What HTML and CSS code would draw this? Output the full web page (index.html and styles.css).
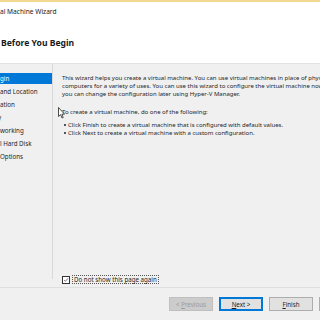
FILE: index.html
```html
<!DOCTYPE html>
<html>

<head>
    <title>New Virtual Machine Wizard</title>
    <link rel="stylesheet" href="styles.css">
</head>

<body>
    <div class="window">
        <div class="titlebar">al Machine Wizard</div>

        <div class="header">
            <h1>Before You Begin</h1>
        </div>

        <div class="main">
            <ul class="steps">
                <li class="active">gin</li>
                <li>and Location</li>
                <li>ation</li>
                <li><span class="stub">y</span></li>
                <li>working</li>
                <li>l Hard Disk</li>
                <li>Options</li>
            </ul>

            <div class="content">
                <p class="intro">
                    <span>This wizard helps you create a virtual machine. You can use virtual machines in place of physical</span>
                    <span>computers for a variety of uses. You can use this wizard to configure the virtual machine now, or</span>
                    <span>you can change the configuration later using Hyper-V Manager.</span>
                </p>
                <p class="lead">To create a virtual machine, do one of the following:</p>
                <ul class="options">
                    <li>Click Finish to create a virtual machine that is configured with default values.</li>
                    <li>Click Next to create a virtual machine with a custom configuration.</li>
                </ul>

                <label class="check">
                    <span class="box">
                        <svg width="8" height="8" viewBox="0 0 8 8">
                            <path d="M1.5 4.2 L3.2 5.8 L6.6 1.8" fill="none" stroke="#333" stroke-width="0.9"/>
                        </svg>
                    </span>
                    <span class="check-label">Do not show this page again</span>
                </label>
            </div>
        </div>

        <div class="footer">
            <button class="btn" disabled>&lt; <u>P</u>revious</button>
            <button class="btn default"><u>N</u>ext &gt;</button>
            <button class="btn"><u>F</u>inish</button>
            <button class="btn">Cancel</button>
        </div>

        <svg class="cursor" width="7" height="12" viewBox="0 0 7 12">
            <path d="M0.5 0.5 L0.5 9.5 L2.6 7.6 L4 11 L5.2 10.5 L3.9 7.2 L6.5 7.2 Z" fill="#fff" stroke="#222" stroke-width="0.8"/>
        </svg>
    </div>
</body>

</html>
```

FILE: styles.css
```css
body {
    margin: 0;
    width: 320px;
    height: 320px;
    overflow: hidden;
    background-color: #f0f0f0;
    font-family: "Noto Sans", "DejaVu Sans", sans-serif;
    font-size: 6px;
    color: #1e1e1e;
}

.window {
    position: relative;
    display: flex;
    flex-direction: column;
    height: 320px;
}

.titlebar {
    height: 19px;
    line-height: 19px;
    background-color: #ffffff;
    border-top: 2px solid #f3d98f;
    font-size: 6.6px;
    color: #222;
    white-space: nowrap;
}

.header {
    height: 42px;
    background-color: #ffffff;
    border-bottom: 1px solid #e2e2e2;
}

h1 {
    margin: 0;
    padding: 16px 0 0 1px;
    font-size: 8.6px;
    font-weight: bold;
    line-height: 12px;
    color: #1a1a1a;
}

.main {
    display: flex;
    height: 223px;
}

.steps {
    list-style: none;
    margin: 0 0 8px 0;
    padding: 9px 0 0 0;
    width: 52px;
    border-right: 1px solid #d8d8d8;
    white-space: nowrap;
    overflow: hidden;
}

.steps li {
    height: 11px;
    line-height: 12px;
    margin-bottom: 2px;
    font-size: 6.2px;
}

.steps li.active {
    background-color: #0078d7;
    color: #ffffff;
}

.stub {
    display: inline-block;
    margin-left: -2px;
}

.content {
    flex: 1;
    display: flex;
    flex-direction: column;
    padding: 10px 0 0 9px;
    white-space: nowrap;
    overflow: hidden;
}

.intro {
    margin: 0;
}

.intro span {
    display: block;
    line-height: 8px;
}

.lead {
    margin: 10px 0 0 0;
    line-height: 8px;
}

.options {
    margin: 5px 0 0 0;
    padding: 0 0 0 2px;
    list-style: none;
}

.options li {
    display: flex;
    align-items: center;
    line-height: 8px;
}

.options li::before {
    content: "";
    width: 2px;
    height: 2px;
    margin-right: 2px;
    border-radius: 50%;
    background-color: #1e1e1e;
}

.check {
    display: flex;
    align-items: center;
    gap: 2px;
    margin-top: auto;
    margin-bottom: 3px;
}

.box {
    display: flex;
    align-items: center;
    justify-content: center;
    width: 8px;
    height: 8px;
    border: 1px solid #333;
    background-color: #fff;
    box-sizing: border-box;
}

.check-label {
    padding: 0 1px;
    border: 1px dotted #555;
    line-height: 7px;
    font-size: 6.2px;
}

.footer {
    display: flex;
    gap: 6px;
    border-top: 1px solid #dfdfdf;
    padding: 9px 0 0 169px;
}

.btn {
    flex: none;
    width: 44px;
    height: 14px;
    padding: 0;
    border: 1px solid #adadad;
    background-color: #e1e1e1;
    font-family: "Noto Sans", "DejaVu Sans", sans-serif;
    font-size: 6.2px;
    color: #1e1e1e;
}

.btn:disabled {
    background-color: #cccccc;
    border-color: #bfbfbf;
    color: #9a9a9a;
}

.btn.default {
    border-color: #0078d7;
    box-shadow: inset 0 0 0 1px #0078d7;
}

.cursor {
    position: absolute;
    left: 58px;
    top: 107px;
}
```
